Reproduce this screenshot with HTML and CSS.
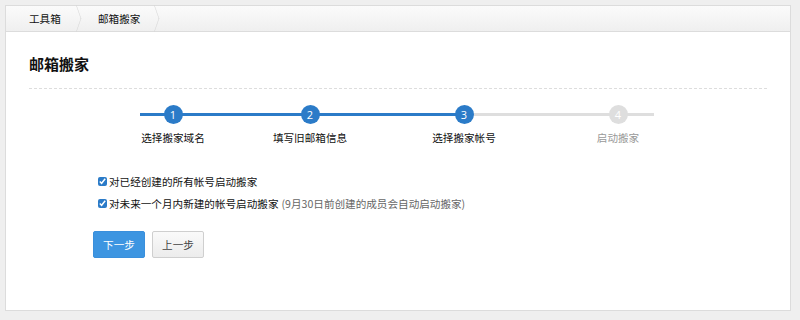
FILE: index.html
```html
<html>
<head>
<meta charset="utf-8">
<title>邮箱搬家</title>
<link rel="stylesheet" href="styles.css">
</head>
<body>
<div class="panel">
  <div class="crumbs">
    <a class="crumb first" href="#">工具箱</a>
    <a class="crumb" href="#">邮箱搬家</a>
  </div>
  <div class="content">
    <h2 class="title">邮箱搬家</h2>

    <div class="steps">
      <div class="track"></div>
      <div class="track done"></div>
      <div class="step on first"><span class="num">1</span><span class="label">选择搬家域名</span></div>
      <div class="step on"><span class="num">2</span><span class="label">填写旧邮箱信息</span></div>
      <div class="step on"><span class="num">3</span><span class="label">选择搬家帐号</span></div>
      <div class="step"><span class="num">4</span><span class="label">启动搬家</span></div>
    </div>

    <div class="opts">
      <label class="opt"><input type="checkbox" checked>对已经创建的所有帐号启动搬家</label>
      <label class="opt"><input type="checkbox" checked>对未来一个月内新建的帐号启动搬家 <span class="note">(9月30日前创建的成员会自动启动搬家)</span></label>
    </div>

    <div class="btns">
      <button type="button" class="btn primary">下一步</button>
      <button type="button" class="btn">上一步</button>
    </div>
  </div>
</div>
</body>
</html>
```
FILE: styles.css
```css
body {
  margin: 0;
  padding: 5px 9px 9px 5px;
  background: #efefef;
  font-family: "Noto Sans CJK SC", "Noto Sans", sans-serif;
  font-size: 10.6px;
  color: #111;
}
.panel {
  background: #fff;
  border: 1px solid #dcdcdc;
  height: 306px;
  box-sizing: border-box;
}
.crumbs {
  display: flex;
  height: 25px;
  background: linear-gradient(#fbfbfb, #efefef);
  border-bottom: 1px solid #dcdcdc;
}
.crumb {
  position: relative;
  display: flex;
  align-items: center;
  width: 78px;
  padding-left: 16px;
  box-sizing: border-box;
  color: #111;
  text-decoration: none;
  line-height: 25px;
}
.crumb.first {
  width: 76px;
  padding-left: 23px;
}
.crumb::after {
  content: "";
  position: absolute;
  right: -4px;
  top: 3px;
  width: 18px;
  height: 18px;
  border-top: 1px solid #d3d3d3;
  border-right: 1px solid #d3d3d3;
  transform: scaleX(0.35) rotate(45deg);
}
.content {
  padding: 0 23px;
}
.title {
  margin: 0;
  padding: 20px 0 12px;
  font-size: 15px;
  font-weight: bold;
  line-height: 24px;
  border-bottom: 1px dashed #dddddd;
}
.steps {
  position: relative;
  display: flex;
  margin: 14px 0 0 94px;
  height: 46px;
}
.track {
  position: absolute;
  left: 17px;
  top: 10px;
  width: 514px;
  height: 3px;
  background: #dedede;
}
.track.done {
  width: 323px;
  background: #2b7bc8;
}
.step {
  position: relative;
  width: 100px;
  margin-right: 54px;
  display: flex;
  flex-direction: column;
  align-items: center;
  color: #999;
}
.step.first {
  margin-right: 37px;
}
.num {
  width: 19px;
  height: 19px;
  border-radius: 50%;
  background: #dedede;
  color: #fff;
  font-family: "Open Sans", sans-serif;
  font-size: 11px;
  line-height: 19px;
  text-align: center;
  margin-top: 2px;
}
.step.on {
  color: #111;
}
.step.on .num {
  background: #2b7bc8;
}
.label {
  margin-top: 6px;
  line-height: 16px;
}
.opts {
  margin: 21px 0 0 68px;
}
.opt {
  display: flex;
  align-items: center;
  height: 22px;
}
.opt input {
  width: 9px;
  height: 9px;
  margin: 0 2px 0 1px;
  accent-color: #2b7bc8;
}
.note {
  color: #666;
  margin-left: 3px;
}
.btns {
  display: flex;
  gap: 7px;
  margin: 17px 0 0 64px;
}
.btn {
  width: 52px;
  height: 27px;
  padding: 0;
  border: 1px solid #cfcfcf;
  border-radius: 2px;
  background: linear-gradient(#fafafa, #ececec);
  color: #444;
  font-family: inherit;
  font-size: 10.6px;
}
.btn.primary {
  border-color: #3a8fdc;
  background: #3d95e1;
  color: #fff;
}
```
